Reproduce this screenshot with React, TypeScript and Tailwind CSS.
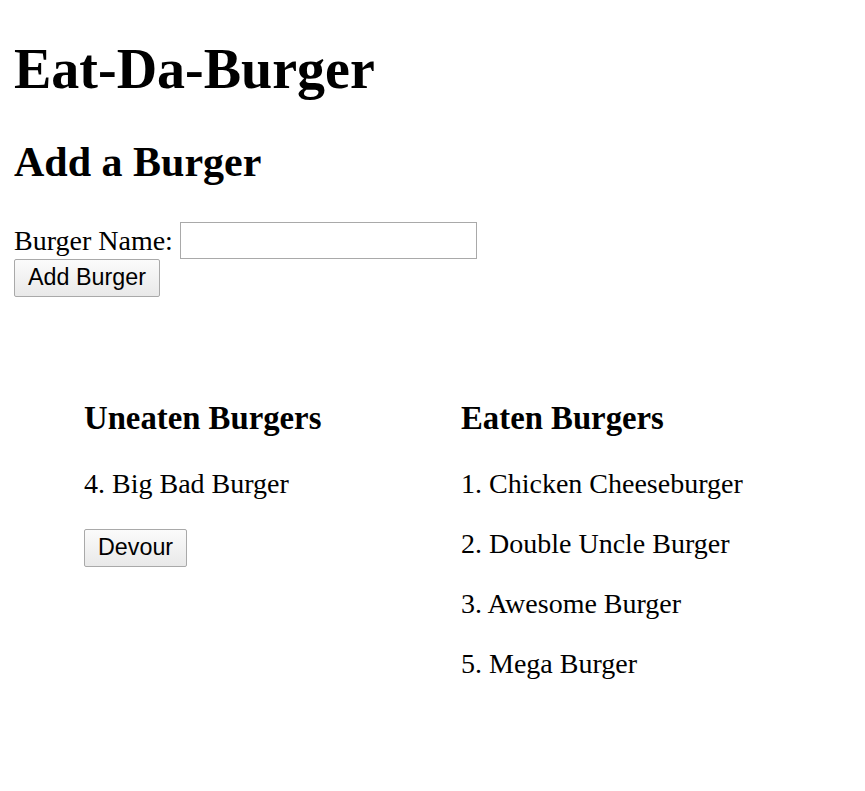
import React from "react";

const uneaten = [{ id: 4, name: "Big Bad Burger" }];

const eaten = [
  { id: 1, name: "Chicken Cheeseburger" },
  { id: 2, name: "Double Uncle Burger" },
  { id: 3, name: "Awesome Burger" },
  { id: 5, name: "Mega Burger" },
];

const btn =
  "block h-[38px] border border-[#a9a9a9] bg-gradient-to-b from-[#fbfbfb] to-[#e9e9e9] rounded-[2px] px-[13px] font-['Liberation_Sans',Arial,sans-serif] text-[23.3px] leading-none text-black";

export default function App() {
  return (
    <div className="min-h-[791px] bg-white px-[14px] font-['Liberation_Serif','Times_New_Roman',serif] text-[28px] text-black">
      <h1 className="pt-[37px] text-[56px] font-bold leading-[64px]">
        Eat-Da-Burger
      </h1>
      <h2 className="mt-[37px] text-[42px] font-bold leading-[48px]">
        Add a Burger
      </h2>

      <form className="mt-[36px]" onSubmit={(e) => e.preventDefault()}>
        <div className="flex items-center gap-[7px]">
          <label className="leading-[32px]">Burger Name:</label>
          <input
            type="text"
            className="h-[37px] w-[297px] border border-[#a9a9a9] bg-white px-[3px] outline-none"
          />
        </div>
        <button type="submit" className={btn + " w-[146px]"}>
          Add Burger
        </button>
      </form>

      <div className="mt-[103px] flex pl-[70px]">
        <div className="w-[377px]">
          <h3 className="text-[32.76px] font-bold leading-[37.7px]">
            Uneaten Burgers
          </h3>
          {uneaten.map((b) => (
            <p key={b.id} className="mt-[30px] leading-[32px]">
              {b.id}. {b.name}
            </p>
          ))}
          <button className={btn + " mt-[29px] w-[103px]"}>Devour</button>
        </div>
        <div className="w-[377px]">
          <h3 className="text-[32.76px] font-bold leading-[37.7px]">
            Eaten Burgers
          </h3>
          {eaten.map((b, i) => (
            <p
              key={b.id}
              className={(i === 0 ? "mt-[30px]" : "mt-[28px]") + " leading-[32px]"}
            >
              {b.id}. {b.name}
            </p>
          ))}
        </div>
      </div>
    </div>
  );
}
